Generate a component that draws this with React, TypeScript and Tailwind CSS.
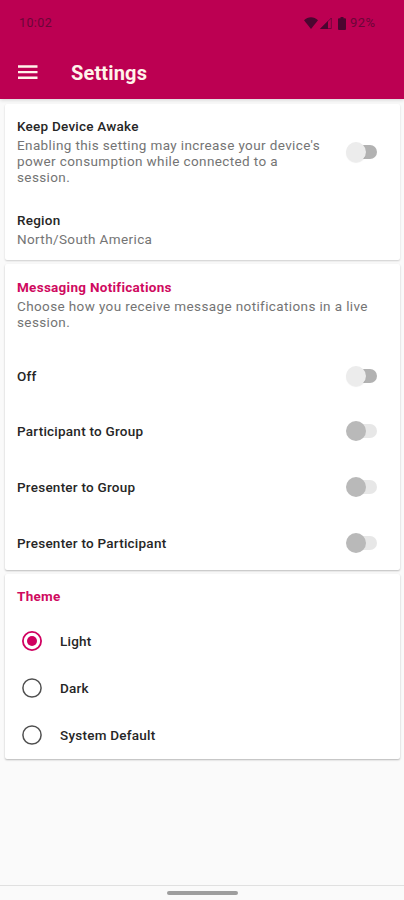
import type { ReactNode } from "react";

function Card({ className, children }: { className: string; children: ReactNode }) {
  return (
    <section
      className={`mr-[4px] ml-[5px] rounded-[2px] bg-white px-3 ${className}`}
    >
      {children}
    </section>
  );
}

function Toggle({ label, disabled = false }: { label: string; disabled?: boolean }) {
  return (
    <button
      type="button"
      role="switch"
      aria-checked={false}
      aria-label={label}
      disabled={disabled}
      className="flex h-5 w-[31px] shrink-0 items-center"
    >
      <span
        className={`z-10 size-5 shrink-0 rounded-full ${
          disabled ? "bg-[#b9b9b9]" : "bg-[#ececec] shadow-[0_1px_1px_rgba(0,0,0,0.08)]"
        }`}
      />
      <span
        className={`-ml-[17px] h-[14px] w-7 shrink-0 rounded-full ${
          disabled ? "bg-[#e7e7e7]" : "bg-[#b2b2b2]"
        }`}
      />
    </button>
  );
}

function SwitchRow({ label, disabled }: { label: string; disabled?: boolean }) {
  return (
    <div className="flex h-[55.6px] items-center justify-between pr-[11px]">
      <span className="text-[13.5px] leading-5 font-medium tracking-[0.24px] text-[#262626]">{label}</span>
      <Toggle label={label} disabled={disabled} />
    </div>
  );
}

function RadioRow({ label, checked = false }: { label: string; checked?: boolean }) {
  return (
    <div role="radio" aria-checked={checked} className="flex h-[47px] items-center pl-[5px]">
      <svg width="20" height="20" viewBox="0 0 20 20" aria-hidden="true">
        <circle
          cx="10"
          cy="10"
          r="9.1"
          fill="none"
          strokeWidth={checked ? 1.8 : 1.5}
          className={checked ? "stroke-[#d00060]" : "stroke-[#505050]"}
        />
        {checked && <circle cx="10" cy="10" r="5" className="fill-[#d00060]" />}
      </svg>
      <span className="ml-[18px] text-[13.5px] leading-5 font-medium tracking-[0.24px] text-[#262626]">{label}</span>
    </div>
  );
}

function StatusBar() {
  return (
    <div className="flex h-[46px] items-center justify-between pr-[26px] pl-[19px] text-[#4a0630]">
      <span className="text-[12.5px] leading-4 tracking-[0.4px] text-[#6b0638]">10:02</span>
      <div className="flex items-center">
        <svg width="14" height="12" viewBox="0 0 14 12" fill="currentColor" aria-hidden="true">
          <path d="M0 3.2C4-.7 10-.7 14 3.2L7 12Z" />
        </svg>
        <svg className="ml-[2px]" width="12" height="12" viewBox="0 0 12 12" aria-hidden="true">
          <path d="M.8 11.5 11.3 1v10.5Z" fill="none" stroke="currentColor" strokeWidth="0.9" opacity="0.7" />
          <path d="M0 12 8 4v8Z" fill="currentColor" />
        </svg>
        <svg className="ml-[6px]" width="8" height="13" viewBox="0 0 8 13" fill="currentColor" aria-hidden="true">
          <path d="M2.5 0h3v1.3H7a1 1 0 0 1 1 1V12a1 1 0 0 1-1 1H1a1 1 0 0 1-1-1V2.300a1 1 0 0 1 1-1h1.500Z" />
        </svg>
        <span className="ml-[4px] w-[28px] text-[13px] leading-4 tracking-[0.5px] text-[#6b0638]">92%</span>
      </div>
    </div>
  );
}

export default function App() {
  return (
    <div className="flex h-[900px] w-[404px] flex-col overflow-hidden bg-[#fafafa] font-['Roboto',sans-serif]">
      <header className="h-[99px] shrink-0 bg-[#bc0052] shadow-[0_1px_4px_rgba(0,0,0,0.16)]">
        <StatusBar />
        <div className="flex h-[53px] items-center pl-[18px] text-[#fff3ea]">
          <button type="button" aria-label="Menu">
            <svg width="20" height="15" viewBox="0 0 20 15" fill="currentColor" aria-hidden="true">
              <path d="M0 .3h19.500v2.400H0zM0 5.900h19.500v2.400H0zM0 11.500h19.500v2.400H0z" />
            </svg>
          </button>
          <h1 className="ml-[33px] text-[20px] leading-6 font-bold tracking-[0.15px]">Settings</h1>
        </div>
      </header>

      <Card className="mt-[5px] h-[156px] shrink-0 pt-[14px] shadow-[0_1px_2px_rgba(0,0,0,0.18)]">
        <div className="flex items-center justify-between pr-[11px]">
          <div className="w-[315px]">
            <h2 className="text-[13.5px] leading-4 font-medium tracking-[0.24px] text-[#262626]">Keep Device Awake</h2>
            <p className="mt-[3px] text-[13.5px] leading-4 tracking-[0.38px] text-[#747474]">
              Enabling this setting may increase your device's
              <br />
              power consumption while connected to a<br />
              session.
            </p>
          </div>
          <Toggle label="Keep Device Awake" />
        </div>
        <div className="mt-[27px]">
          <h2 className="text-[13.5px] leading-4 font-medium tracking-[0.24px] text-[#262626]">Region</h2>
          <p className="mt-[3px] text-[13.5px] leading-4 tracking-[0.38px] text-[#747474]">North/South America</p>
        </div>
      </Card>

      <Card className="mt-[4px] h-[306px] shrink-0 pt-[15px] shadow-[0_1px_2px_rgba(0,0,0,0.25)]">
        <h2 className="text-[13.5px] leading-4 font-bold tracking-[0.28px] text-[#cf0a60]">Messaging Notifications</h2>
        <p className="mt-[3px] mb-[18px] text-[13.5px] leading-4 tracking-[0.38px] text-[#747474]">
          Choose how you receive message notifications in a live
          <br />
          session.
        </p>
        <SwitchRow label="Off" />
        <SwitchRow label="Participant to Group" disabled />
        <SwitchRow label="Presenter to Group" disabled />
        <SwitchRow label="Presenter to Participant" disabled />
      </Card>

      <Card className="mt-[4px] h-[185px] shrink-0 pt-[14px] shadow-[0_1px_2px_rgba(0,0,0,0.28)]">
        <h2 className="text-[13.5px] leading-4 font-bold tracking-[0.28px] text-[#cf0a60]">Theme</h2>
        <div role="radiogroup" aria-label="Theme" className="mt-[13px]">
          <RadioRow label="Light" checked />
          <RadioRow label="Dark" />
          <RadioRow label="System Default" />
        </div>
      </Card>

      <footer className="mt-auto flex h-[15px] shrink-0 justify-center border-t border-[#e0e0e0] pt-[5px]">
        <span className="h-[4px] w-[71px] rounded-full bg-[#9e9e9e]" />
      </footer>
    </div>
  );
}
